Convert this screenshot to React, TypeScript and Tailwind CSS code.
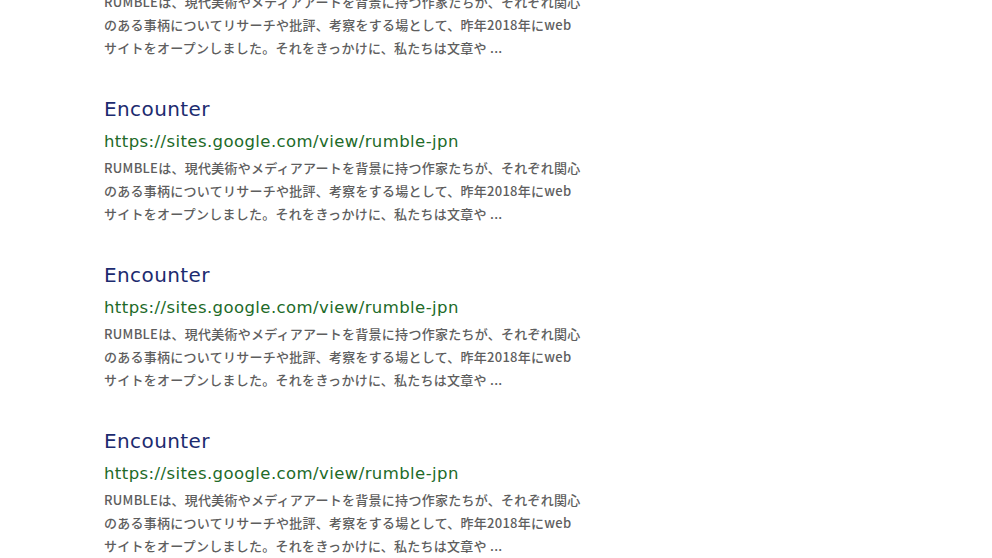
import React from "react";

const results = Array.from({ length: 4 }, () => ({
  title: "Encounter",
  url: "https://sites.google.com/view/rumble-jpn",
  lines: [
    "RUMBLEは、現代美術やメディアアートを背景に持つ作家たちが、それぞれ関心",
    "のある事柄についてリサーチや批評、考察をする場として、昨年2018年にweb",
    "サイトをオープンしました。それをきっかけに、私たちは文章や ...",
  ],
}));

export default function App() {
  return (
    <div className="w-[992px] h-[558px] overflow-hidden bg-white">
      <div className="pl-[104px] -mt-[72px] flex flex-col gap-[35px]">
        {results.map((r, i) => (
          <div key={i} className="flex flex-col">
            <a className="text-[20px] leading-[30px] tracking-[0.02em] text-[#1c2b6f] font-['DejaVu_Sans','Noto_Sans_CJK_JP',sans-serif]">
              {r.title}
            </a>
            <div className="pt-[3px] text-[16.5px] leading-[29px] tracking-[0.025em] text-[#216a28] font-['DejaVu_Sans','Noto_Sans_CJK_JP',sans-serif]">
              {r.url}
            </div>
            <div className="text-[13px] leading-[23px] text-[#5e5e5e] font-medium tracking-[0.02em] font-['Noto_Sans_CJK_JP',sans-serif]">
              {r.lines.map((l, j) => (
                <div key={j} className="whitespace-nowrap">
                  {l}
                </div>
              ))}
            </div>
          </div>
        ))}
      </div>
    </div>
  );
}
